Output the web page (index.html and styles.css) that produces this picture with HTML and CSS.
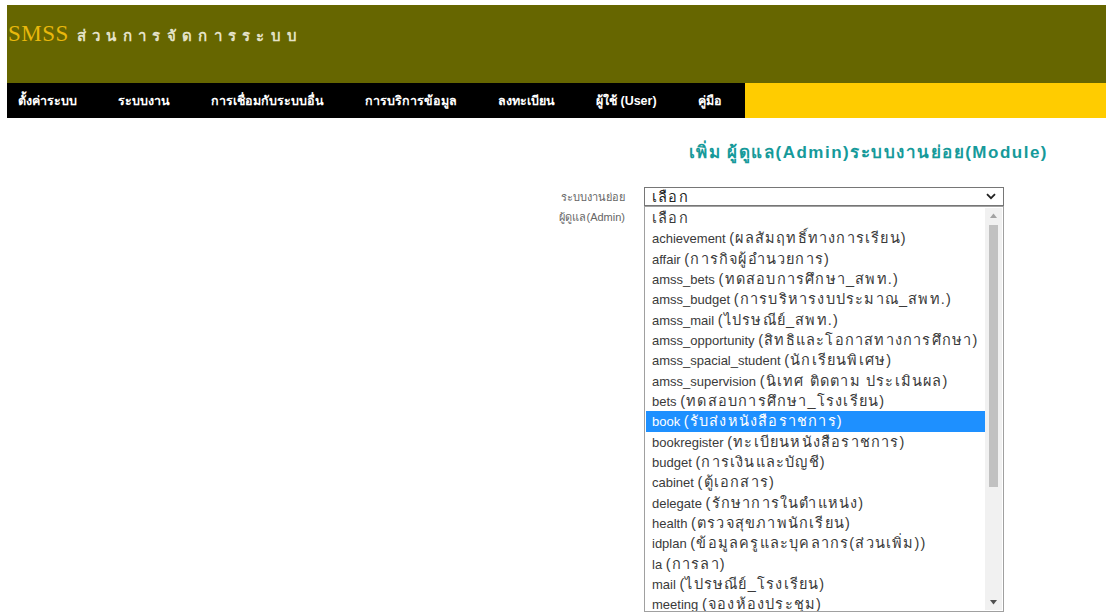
FILE: index.html
```html
<!DOCTYPE html>
<html lang="th">
<head>
<meta charset="utf-8">
<title>SMSS ส่วนการจัดการระบบ</title>
<link rel="stylesheet" href="styles.css">
</head>
<body>
<div class="page">
  <header class="banner">
    <span class="brand">SMSS</span>
    <span class="brand-sub">ส่วนการจัดการระบบ</span>
  </header>
  <nav class="menubar">
    <ul class="menu">
      <li>ตั้งค่าระบบ</li>
      <li>ระบบงาน</li>
      <li>การเชื่อมกับระบบอื่น</li>
      <li>การบริการข้อมูล</li>
      <li>ลงทะเบียน</li>
      <li>ผู้ใช้ (User)</li>
      <li>คู่มือ</li>
    </ul>
    <div class="menu-fill"></div>
  </nav>

  <main class="content">
    <h2 class="title">เพิ่ม ผู้ดูแล(Admin)ระบบงานย่อย(Module)</h2>
    <form class="form">
      <div class="labels">
        <div class="label">ระบบงานย่อย</div>
        <div class="label">ผู้ดูแล(Admin)</div>
      </div>
      <div class="field">
        <div class="select">
          <span class="th">เลือก</span>
          <svg class="chev" width="10" height="7" viewBox="0 0 10 7"><path d="M1 1.2 L5 5.2 L9 1.2" fill="none" stroke="#222" stroke-width="1.8"/></svg>
        </div>
        <div class="dropdown">
          <ul class="options">
            <li><span class="th">เลือก</span></li>
            <li>achievement <span class="th">(ผลสัมฤทธิ์ทางการเรียน)</span></li>
            <li>affair <span class="th">(การกิจผู้อำนวยการ)</span></li>
            <li>amss_bets <span class="th">(ทดสอบการศึกษา_สพท.)</span></li>
            <li>amss_budget <span class="th">(การบริหารงบประมาณ_สพท.)</span></li>
            <li>amss_mail <span class="th">(ไปรษณีย์_สพท.)</span></li>
            <li>amss_opportunity <span class="th">(สิทธิและโอกาสทางการศึกษา)</span></li>
            <li>amss_spacial_student <span class="th">(นักเรียนพิเศษ)</span></li>
            <li>amss_supervision <span class="th">(นิเทศ ติดตาม ประเมินผล)</span></li>
            <li>bets <span class="th">(ทดสอบการศึกษา_โรงเรียน)</span></li>
            <li class="selected">book <span class="th">(รับส่งหนังสือราชการ)</span></li>
            <li>bookregister <span class="th">(ทะเบียนหนังสือราชการ)</span></li>
            <li>budget <span class="th">(การเงินและบัญชี)</span></li>
            <li>cabinet <span class="th">(ตู้เอกสาร)</span></li>
            <li>delegate <span class="th">(รักษาการในตำแหน่ง)</span></li>
            <li>health <span class="th">(ตรวจสุขภาพนักเรียน)</span></li>
            <li>idplan <span class="th">(ข้อมูลครูและบุคลากร(ส่วนเพิ่ม))</span></li>
            <li>la <span class="th">(การลา)</span></li>
            <li>mail <span class="th">(ไปรษณีย์_โรงเรียน)</span></li>
            <li>meeting <span class="th">(จองห้องประชุม)</span></li>
          </ul>
          <div class="scrollbar">
            <svg class="arrow" width="7" height="5" viewBox="0 0 7 5"><path d="M0 5 L3.5 0.5 L7 5 Z" fill="#a3a3a3"/></svg>
            <div class="track"><div class="thumb"></div></div>
            <svg class="arrow" width="7" height="5" viewBox="0 0 7 5"><path d="M0 0 L3.5 4.5 L7 0 Z" fill="#505050"/></svg>
          </div>
        </div>
      </div>
    </form>
  </main>
</div>
</body>
</html>
```

FILE: styles.css
```css
html, body {
  margin: 0;
  padding: 0;
  background: #fff;
}

body {
  font-family: Tahoma, "Liberation Sans", "Noto Sans", sans-serif;
  height: 613px;
  overflow: hidden;
}

.page {
  padding: 5px 0 0 7px;
}

/* olive banner with the system name */
.banner {
  background: #666600;
  height: 78px;
  display: flex;
  align-items: center;
  padding-left: 1px;
  padding-bottom: 20px;
  box-sizing: border-box;
}

.brand {
  font-family: "Liberation Serif", serif;
  font-size: 23px;
  color: #e9b80c;
  letter-spacing: 0.5px;
}

.brand-sub {
  margin-left: 8px;
  font-size: 15px;
  font-weight: bold;
  color: #e4e2c8;
  letter-spacing: 6.3px;
  padding-top: 3px;
}

/* main menu */
.menubar {
  display: flex;
  height: 35px;
}

.menu {
  list-style: none;
  margin: 0;
  padding: 0 0 0 11px;
  width: 738px;
  box-sizing: border-box;
  background: #000;
  display: flex;
  align-items: center;
  gap: 41px;
}

.menu li {
  color: #fff;
  font-size: 12.5px;
  font-weight: bold;
  white-space: nowrap;
}

.menu-fill {
  flex: 1;
  background: #ffcc00;
}

/* form area */
.content {
  padding-top: 24px;
}

.title {
  margin: 0;
  text-align: right;
  padding-right: 58px;
  font-size: 17px;
  font-weight: bold;
  color: #169a9a;
  letter-spacing: 1.5px;
  line-height: 22px;
}

.form {
  display: flex;
  gap: 19px;
  margin-top: 23px;
}

.labels {
  width: 618px;
  display: flex;
  flex-direction: column;
  align-items: flex-end;
  padding-top: 2px;
  gap: 4px;
}

.label {
  font-size: 11px;
  color: #666;
  line-height: 16px;
}

.field {
  position: relative;
  width: 360px;
}

.select {
  height: 19px;
  border: 1px solid #767676;
  box-sizing: border-box;
  display: flex;
  align-items: center;
  justify-content: space-between;
  padding: 0 7px 0 7px;
  font-size: 13px;
  color: #222;
  background: #fff;
}

.chev {
  display: block;
}

/* Thai captions are set a little wider */
.th {
  font-size: 14.5px;
  letter-spacing: 1.2px;
}

/* open option list of the select */
.dropdown {
  position: absolute;
  left: 0;
  top: 19px;
  width: 360px;
  height: 406px;
  border: 1px solid #a0a0a0;
  box-sizing: border-box;
  background: #fff;
  display: flex;
  padding: 1px;
  overflow: hidden;
}

.options {
  list-style: none;
  margin: 0;
  padding: 0;
  flex: 1;
}

.options li {
  font-size: 13px;
  line-height: 20.33px;
  height: 20.33px;
  padding-left: 6px;
  color: #3a3a3a;
  white-space: nowrap;
}

.options li.selected {
  background: #1e90ff;
  color: #fff;
}

.scrollbar {
  width: 17px;
  background: #f1f1f1;
  display: flex;
  flex-direction: column;
  align-items: center;
}

.arrow {
  margin: 5px 0;
}

.track {
  flex: 1;
  width: 100%;
  display: flex;
  justify-content: center;
}

.thumb {
  width: 9px;
  height: 262px;
  background: #c1c1c1;
  margin-top: 2px;
}
```
